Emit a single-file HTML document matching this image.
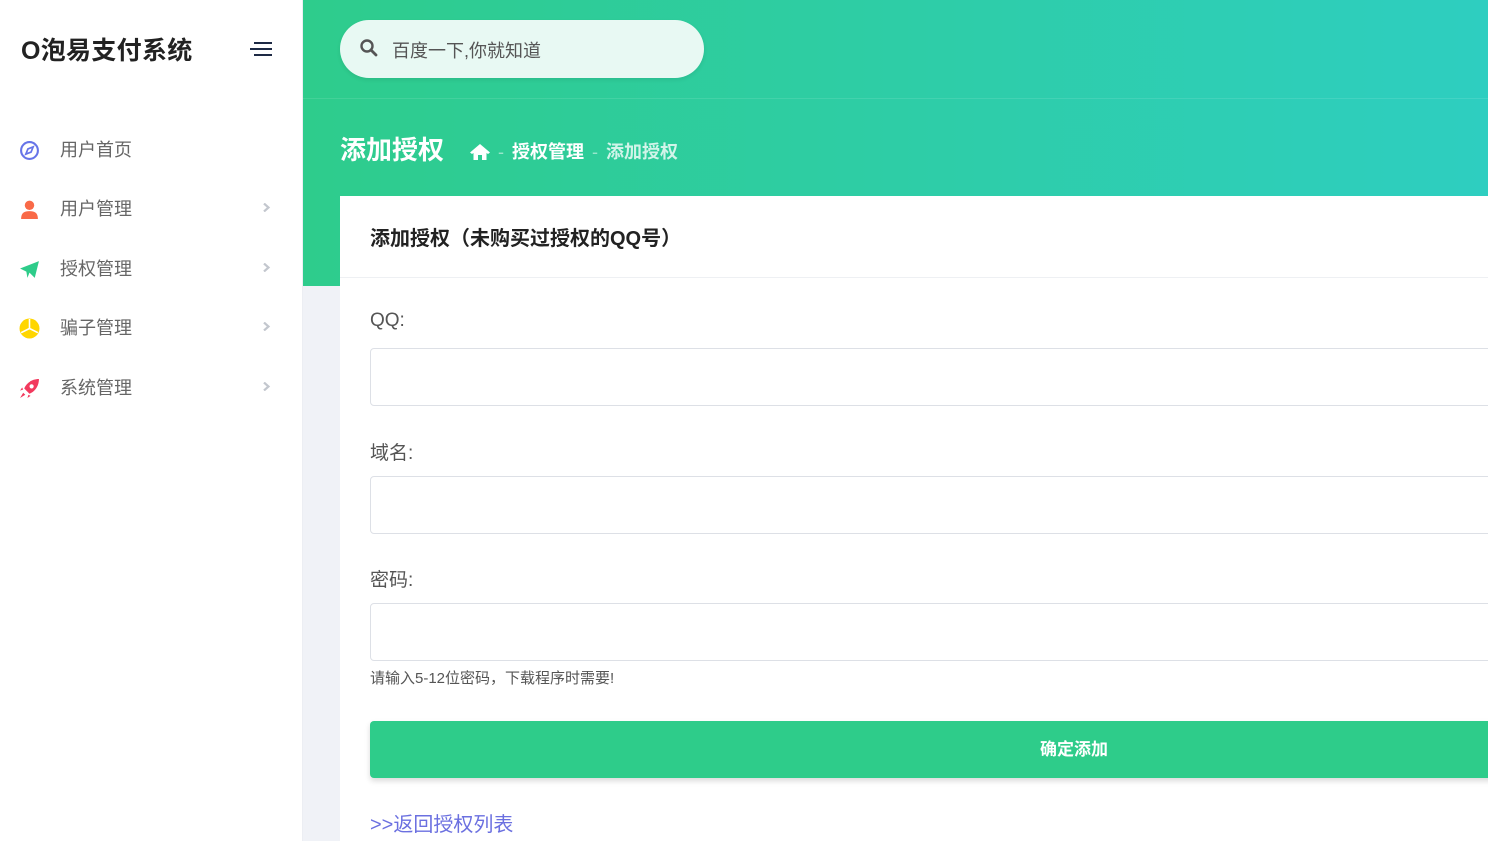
<!DOCTYPE html>
<html><head><meta charset="utf-8"><style>
*{box-sizing:border-box;margin:0;padding:0}
body{width:1488px;height:841px;overflow:hidden;font-family:"Liberation Sans","Noto Sans CJK SC",sans-serif;background:#f0f2f7;position:relative}
.side{position:absolute;left:0;top:0;width:303px;height:841px;background:#fff;border-right:1px solid #eceef3}
.logo{position:absolute;left:21px;top:31px;font-size:25px;font-weight:bold;color:#222;letter-spacing:0.3px}
.ham{position:absolute;left:250px;top:42px;width:22px}
.ham i{display:block;height:2px;background:#1e2a45;margin-bottom:4px;margin-left:4px}
.ham i:nth-child(2){margin-left:0}
.item{position:absolute;left:0;width:303px;height:40px}
.item .ic{position:absolute;left:19px;top:10px;width:21px;height:21px}
.item .t{position:absolute;left:60px;top:6px;font-size:18px;color:#666}
.item .ar{position:absolute;left:262px;top:14px;width:9px;height:9px}
.top{position:absolute;left:303px;top:0;right:0;height:286px;background:linear-gradient(90deg,#2ecc8c,#2ecec0)}
.hline{position:absolute;left:303px;right:0;top:98px;height:1px;background:rgba(255,255,255,.1)}
.search{position:absolute;left:340px;top:20px;width:364px;height:58px;border-radius:29px;background:#e8f9f3;box-shadow:0 2px 4px rgba(0,0,0,.08)}
.search span{position:absolute;left:52px;top:17px;font-size:18px;color:#555}
.ptitle{position:absolute;left:340px;top:130px;font-size:26px;font-weight:bold;color:#fff}
.bc{position:absolute;left:470px;top:138px;font-size:18px;font-weight:bold;color:#fff}
.bc .d{color:rgba(255,255,255,.5);margin:0 8px;font-weight:normal}
.card{position:absolute;left:340px;top:196px;right:0;bottom:0;background:#fff}
.ch{height:82px;border-bottom:1px solid #eef0f3;padding:26px 30px;font-size:20px;font-weight:bold;color:#222}
.lbl{position:absolute;left:30px;font-size:19px;color:#555}
.inp{position:absolute;left:30px;right:-10px;height:58px;border:1px solid #dde0e6;border-radius:4px}
.hint{position:absolute;left:30px;top:471px;font-size:15px;color:#555}
.btn{position:absolute;left:30px;right:-290px;top:525px;height:57px;background:#2ecc8a;border-radius:4px;box-shadow:0 3px 6px rgba(0,0,0,.15);color:#fff;font-weight:bold;font-size:17px;text-align:center;line-height:57px}
.back{position:absolute;left:30px;top:612px;font-size:20px;color:#6b70e0}
</style></head><body>
<div class="side">
<div class="logo">O泡易支付系统</div>
<div class="ham"><i></i><i></i><i></i></div>
<div class="item" style="top:130px"><svg class="ic" viewBox="0 0 20 20"><circle cx="10" cy="10" r="8" fill="none" stroke="#6674e8" stroke-width="2"/><path d="M13.5 6.5L11.5 11.5 6.5 13.5 8.5 8.5Z" fill="none" stroke="#6674e8" stroke-width="1.6"/></svg><span class="t">用户首页</span></div>
<div class="item" style="top:189px"><svg class="ic" viewBox="0 0 20 20"><circle cx="10" cy="6" r="4.5" fill="#f96a48"/><path d="M2 19C2 13 5 11.5 10 11.5S18 13 18 19Z" fill="#f96a48"/></svg><span class="t">用户管理</span><svg class="ar" viewBox="0 0 9 9"><path d="M2 0.5L6.5 4.5 2 8.5" fill="none" stroke="#c3c7ce" stroke-width="2.2"/></svg></div>
<div class="item" style="top:249px"><svg class="ic" viewBox="0 0 20 20"><path d="M1 9L19 2 15 18 10 13 8 18 7 12Z" fill="#2ecc8a"/></svg><span class="t">授权管理</span><svg class="ar" viewBox="0 0 9 9"><path d="M2 0.5L6.5 4.5 2 8.5" fill="none" stroke="#c3c7ce" stroke-width="2.2"/></svg></div>
<div class="item" style="top:308px"><svg class="ic" viewBox="0 0 20 20"><circle cx="10" cy="10" r="9.5" fill="#ffd600"/><path d="M10 1V10L18 14M10 10L2 14" stroke="#fff" stroke-width="1.5" fill="none"/></svg><span class="t">骗子管理</span><svg class="ar" viewBox="0 0 9 9"><path d="M2 0.5L6.5 4.5 2 8.5" fill="none" stroke="#c3c7ce" stroke-width="2.2"/></svg></div>
<div class="item" style="top:368px"><svg class="ic" viewBox="0 0 20 20"><path d="M19 1C12 1 7 5 5 10L10 15C15 13 19 8 19 1ZM4 11L1 12 3 9ZM9 16L8 19 11 17ZM4 14L1 19 6 16Z" fill="#f23a5e"/><circle cx="12" cy="8" r="2" fill="#fff"/></svg><span class="t">系统管理</span><svg class="ar" viewBox="0 0 9 9"><path d="M2 0.5L6.5 4.5 2 8.5" fill="none" stroke="#c3c7ce" stroke-width="2.2"/></svg></div>
</div>
<div class="top"></div>
<div class="hline"></div>
<div class="search"><svg style="position:absolute;left:20px;top:19px" width="18" height="18" viewBox="0 0 18 18"><circle cx="7" cy="7" r="5.5" fill="none" stroke="#555" stroke-width="2.4"/><path d="M11 11L16 16" stroke="#555" stroke-width="2.8" stroke-linecap="round"/></svg><span>百度一下,你就知道</span></div>
<div class="ptitle">添加授权</div>
<div class="bc"><svg width="20" height="17" viewBox="0 0 20 17" style="vertical-align:-2px"><path d="M10 1L0 9.5 2 11 3.5 10V17H8V12H12V17H16.5V10L18 11 20 9.5Z" fill="#fff"/></svg><span class="d">-</span>授权管理<span class="d">-</span><span style="color:rgba(255,255,255,.78)">添加授权</span></div>
<div class="card">
<div class="ch">添加授权（未购买过授权的QQ号）</div>
<div class="lbl" style="top:114px">QQ:</div>
<div class="inp" style="top:152px"></div>
<div class="lbl" style="top:242px">域名:</div>
<div class="inp" style="top:280px"></div>
<div class="lbl" style="top:369px">密码:</div>
<div class="inp" style="top:407px"></div>
<div class="hint">请输入5-12位密码，下载程序时需要!</div>
<div class="btn">确定添加</div>
<div class="back">&gt;&gt;返回授权列表</div>
</div>
</body></html>
